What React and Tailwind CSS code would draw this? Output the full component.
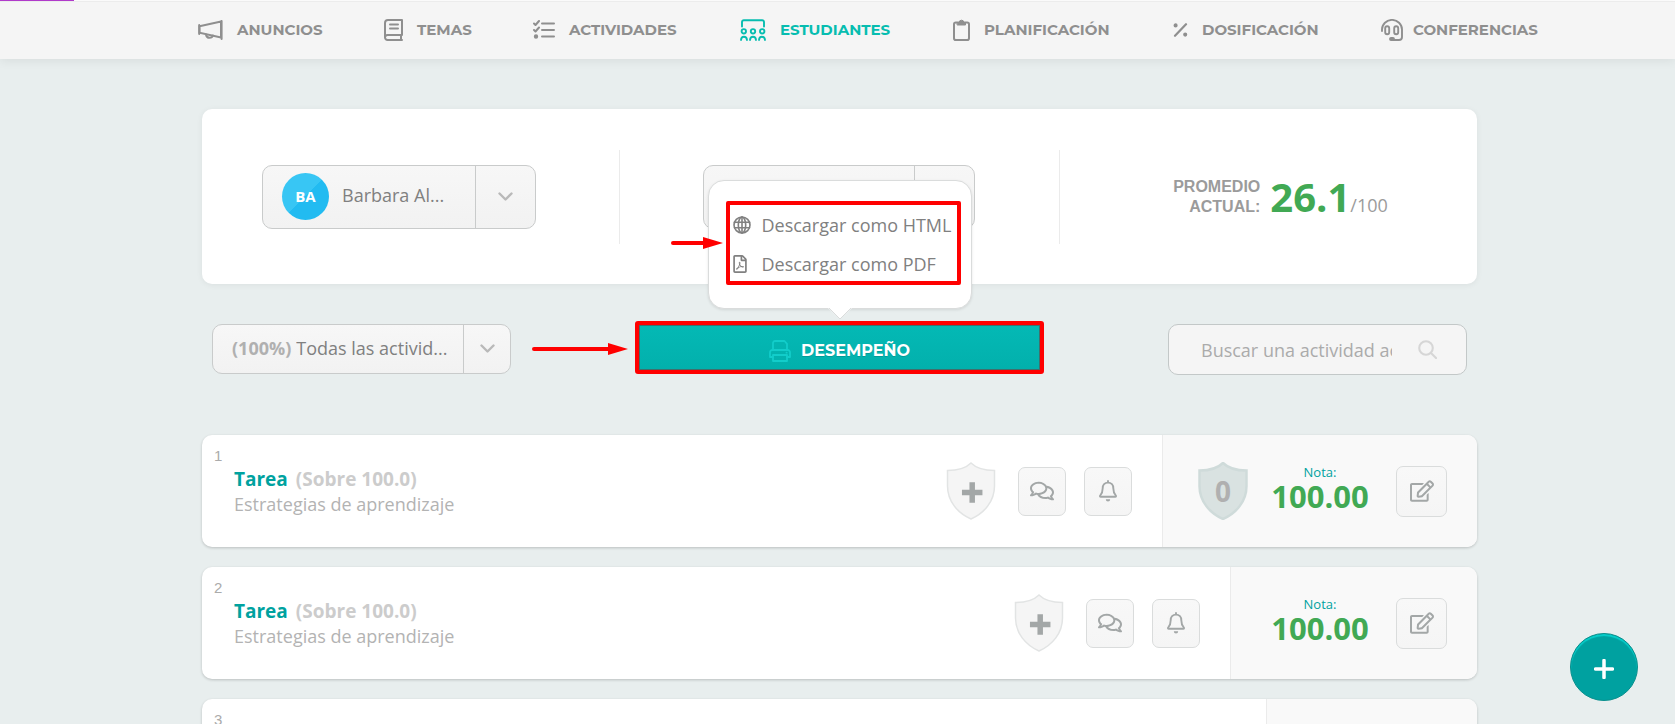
import React from "react";
import { FaRegComments, FaRegEdit, FaRegFilePdf } from "react-icons/fa";

const stroke = {
  fill: "none",
  stroke: "currentColor",
  strokeLinecap: "round",
  strokeLinejoin: "round",
};

const MegaphoneIcon = () => (
  <svg width="25" height="20" viewBox="0 0 25 20" strokeWidth="2" {...stroke}>
    <path d="M1.5 6.2 23 1.5v16L1.5 12.8z" strokeLinejoin="miter" />
    <path d="M1.2 5v9M23.6 1v18" />
    <path d="M8 14.5c.3 2.2 1.800 3.300 3.600 3.300 1.700 0 2.900-.9 3.300-2.300" />
  </svg>
);

const BookIcon = () => (
  <svg width="19" height="22" viewBox="0 0 19 22" strokeWidth="2" {...stroke}>
    <path d="M18 1H4a3 3 0 0 0-3 3v14.500A2.500 2.500 0 0 0 3.500 21H18M18 1v15H3.500A2.500 2.500 0 0 0 1 18.500M17 16v5" />
    <path d="M6 5.500h8M6 9.500h8" />
  </svg>
);

const TasksIcon = () => (
  <svg width="22" height="20" viewBox="0 0 22 20" strokeWidth="2" {...stroke}>
    <path d="M9 3.500h12M9 10h12M9 16.500h12" />
    <path d="m1 3.500 1.500 1.500L6 1M1 10l1.500 1.500L6 7.500" />
    <circle cx="3" cy="16.500" r="1.200" fill="currentColor" />
  </svg>
);

const ClassIcon = () => (
  <svg width="26" height="22" viewBox="0 0 26 22" strokeWidth="1.900" {...stroke}>
    <path d="M2 7.500V3a1.800 1.800 0 0 1 1.800-1.800h18.400A1.800 1.800 0 0 1 24 3v4.500" />
    <circle cx="3.800" cy="12.300" r="2.200" />
    <circle cx="13" cy="12.300" r="2.200" />
    <circle cx="22.200" cy="12.300" r="2.200" />
    <path d="M1 21c.2-2 1.300-3.200 2.900-3.200S6.800 19 7 21M10 21c.2-2 1.400-3.200 3-3.200s2.800 1.200 3 3.200M19 21c.2-2 1.300-3.200 2.900-3.200S24.800 19 25 21" />
  </svg>
);

const ClipboardIcon = () => (
  <svg width="17" height="22" viewBox="0 0 17 22" strokeWidth="2" {...stroke}>
    <rect x="1" y="3.500" width="15" height="17.500" rx="1.800" />
    <path
      d="M4.500 3.500h1.700a2.300 2.300 0 0 1 4.600 0h1.700V6h-8z"
      fill="currentColor"
      strokeWidth="1"
    />
  </svg>
);

const PercentIcon = () => (
  <svg width="15" height="14" viewBox="0 0 15 14" strokeWidth="2.200" {...stroke}>
    <path d="M2 12.800 13 1.200" />
    <circle cx="2.600" cy="2.400" r="1.300" fill="currentColor" strokeWidth="1.500" />
    <circle cx="12.200" cy="11.600" r="1.300" fill="currentColor" strokeWidth="1.500" />
  </svg>
);

const HeadsetIcon = () => (
  <svg width="22" height="22" viewBox="0 0 22 22" strokeWidth="1.900" {...stroke}>
    <path d="M1 12v-1.500a9.900 9.500 0 0 1 20 0V18a3 3 0 0 1-3 3h-6" />
    <rect x="4.200" y="7.300" width="4" height="8" rx="2" />
    <rect x="13.200" y="7.300" width="4" height="8" rx="2" />
    <rect x="9" y="19" width="4" height="2" rx="1" fill="currentColor" />
  </svg>
);

const ChevronIcon = () => (
  <svg width="15" height="10" viewBox="0 0 15 10" {...stroke} strokeWidth="2.400" className="pointer-events-none text-[#b9b9b9]">
    <path d="m1.500 1.500 6 6 6-6" />
  </svg>
);

const GlobeIcon = () => (
  <svg width="18" height="18" viewBox="0 0 18 18" strokeWidth="1.600" {...stroke}>
    <circle cx="9" cy="9" r="8" />
    <ellipse cx="9" cy="9" rx="3.700" ry="8" />
    <path d="M1.500 6.200h15M1.500 11.800h15M9 1v16" />
  </svg>
);

const PrinterIcon = () => (
  <svg width="22" height="22" viewBox="0 0 22 22" strokeWidth="1.800" {...stroke}>
    <path d="M4 10V3a2 2 0 0 1 2-2h9.500L18 3.800V10" />
    <path d="M4 17H1v-4.500A2.500 2.500 0 0 1 3.500 10h15a2.500 2.500 0 0 1 2.500 2.500V17h-3" />
    <path d="M4 15h14v6H4z" />
    <path d="M17.500 12.700h.2" />
  </svg>
);

const SearchIcon = () => (
  <svg width="19" height="19" viewBox="0 0 19 19" strokeWidth="2.100" {...stroke} className="shrink-0 text-[#d6d6d6]">
    <circle cx="8" cy="8" r="6.800" />
    <path d="m13 13 5 5" />
  </svg>
);

const BellIcon = () => (
  <svg width="18" height="22" viewBox="0 0 18 22" strokeWidth="1.900" {...stroke}>
    <path d="M9 1v1.500M9 2.600c-3.300 0-5.300 2.400-5.300 5.600 0 4.300-1.200 5.800-2.500 7.300-.4.500-.2 1.300.5 1.300h14.600c.7 0 .9-.8.500-1.300-1.300-1.500-2.500-3-2.500-7.300 0-3.200-2-5.600-5.300-5.600z" />
    <path d="M6.800 19.300h4.400a2.200 2.200 0 0 1-4.400 0z" fill="currentColor" stroke="none" />
  </svg>
);

const SHIELD =
  "M25 1C20 6 12 8.500 1.500 8.500V24c0 15 10 27 23.500 33 13.500-6 23.500-18 23.500-33V8.500C38 8.500 30 6 25 1z";

const PlusShield = () => (
  <button type="button" aria-label="Agregar insignia">
    <svg width="50" height="58" viewBox="0 0 50 58">
      <path d={SHIELD} fill="#f5f5f5" stroke="#e2e4e4" strokeWidth="1.500" />
      <path d="M26.200 23v15M18.700 30.500h15" stroke="#a3a7a7" strokeWidth="5.500" strokeLinecap="square" />
    </svg>
  </button>
);

const ScoreShield = ({ value }) => (
  <div className="grid h-[58px] w-[50px] shrink-0 place-items-center">
    <svg width="50" height="58" viewBox="0 0 50 58" className="col-start-1 row-start-1">
      <path d={SHIELD} fill="#d9e2e1" stroke="#cfdbda" strokeWidth="2.500" />
    </svg>
    <span className="col-start-1 row-start-1 text-[28px] leading-8 font-bold text-[#b0b0b0]">{value}</span>
  </div>
);

const NAV = [
  { label: "ANUNCIOS", icon: <MegaphoneIcon /> },
  { label: "TEMAS", icon: <BookIcon /> },
  { label: "ACTIVIDADES", icon: <TasksIcon /> },
  { label: "ESTUDIANTES", icon: <ClassIcon />, active: true },
  { label: "PLANIFICACIÓN", icon: <ClipboardIcon /> },
  { label: "DOSIFICACIÓN", icon: <PercentIcon /> },
  { label: "CONFERENCIAS", icon: <HeadsetIcon />, tight: true },
];

function Nav() {
  return (
    <header>
      <div className="h-px bg-white">
        <div className="h-px w-[74px] bg-[#b43ccf]" />
      </div>
      <nav className="grid h-[58px] grid-cols-[186fr_149fr_207fr_213fr_220fr_208fr_159fr] items-center border-t border-[#ececec] bg-[#f5f5f5] pr-[135px] pb-0.5 pl-[198px] shadow-[0_2px_10px_rgba(0,0,0,0.07)]">
        {NAV.map((item) => (
          <a
            key={item.label}
            href="#"
            className={
              "flex items-center font-['Montserrat','Inter',sans-serif] text-[15px] leading-6 font-bold " +
              (item.tight ? "gap-2.5 " : "gap-3.5 ") +
              (item.active ? "text-[#07bdb0]" : "text-[#8f8f8f]")
            }
          >
            {item.icon}
            {item.label}
          </a>
        ))}
      </nav>
    </header>
  );
}

const boxStyle =
  "flex items-stretch overflow-hidden rounded-[10px] border border-[#c9cbcb] bg-linear-to-b from-[#f7f7f7] to-[#f2f2f2]";

function Summary() {
  return (
    <section className="grid h-[175px] grid-cols-[418fr_440fr_417fr] items-center rounded-[10px] bg-white shadow-[0_1px_6px_rgba(0,0,0,0.06)]">
      <div className="flex h-[94px] items-center justify-center border-r border-[#ebebeb] pr-[23px]">
        <div className={boxStyle + " h-16 w-[274px]"}>
          <div className="flex min-w-0 flex-1 items-center gap-[13px] pl-[19px]">
            <span className="grid size-[47px] shrink-0 place-items-center rounded-full bg-[linear-gradient(135deg,#38c6f4_50%,#22bbf1_50%)] text-[15px] font-bold text-white">
              BA
            </span>
            <select aria-label="Estudiante" className="min-w-0 flex-1 appearance-none bg-transparent pb-1 text-lg text-[#808080] outline-none">
              <option>Barbara Al...</option>
            </select>
          </div>
          <div className="flex w-[60px] items-center justify-center border-l border-[#c9cbcb]">
            <ChevronIcon />
          </div>
        </div>
      </div>
      <div className="flex h-[94px] items-center justify-center border-r border-[#ebebeb] pr-0.5">
        <div className={boxStyle + " h-16 w-[272px]"}>
          <select aria-label="Periodo" className="min-w-0 flex-1 appearance-none bg-transparent outline-none" />
          <div className="w-[60px] border-l border-[#c9cbcb]" />
        </div>
      </div>
      <div className="flex items-center justify-center gap-2.5 pl-6">
        <p className="text-right font-['Liberation_Sans',sans-serif] text-base leading-5 font-bold text-[#9b9b9b]">
          PROMEDIO
          <br />
          ACTUAL:
        </p>
        <p className="flex items-baseline text-[#9b9b9b]">
          <strong className="text-[40px] leading-12 font-bold text-[#41a954]">26.1</strong>
          <span className="text-lg">/100</span>
        </p>
      </div>
    </section>
  );
}

const Arrow = ({ width, className }) => (
  <svg width={width} height="12" viewBox={`0 0 ${width} 12`} className={"absolute " + className} aria-hidden="true">
    <path d={`M2 6H${width - 18}`} stroke="#f00" strokeWidth="4" strokeLinecap="round" />
    <path d={`M${width - 20} 0 ${width} 6 ${width - 20} 12z`} fill="#f00" />
  </svg>
);

const menuItem =
  "flex h-8 w-full items-center gap-[11px] text-lg whitespace-nowrap text-[#808080]";

function DownloadMenu() {
  return (
    <div className="absolute bottom-full left-1/2 mb-3 w-[264px] -translate-x-1/2 rounded-[16px] border border-[#dadcdc] bg-white pt-5 pr-2.5 pb-[23px] pl-[17px] shadow-[0_1px_3px_rgba(0,0,0,0.1)]">
      <Arrow width={52} className="top-14 -left-[38px]" />
      <div className="flex flex-col gap-[7px] rounded-[2px] border-4 border-[#f00] pt-1 pb-px pl-[3px]">
        <button type="button" className={menuItem}>
          <span className="w-[18px]"><GlobeIcon /></span>
          Descargar como HTML
        </button>
        <button type="button" className={menuItem}>
          <span className="w-[18px]"><FaRegFilePdf className="size-[18px] -ml-[2px]" /></span>
          Descargar como PDF
        </button>
      </div>
      <svg width="24" height="12" viewBox="0 0 24 12" className="absolute top-full left-1/2 -translate-x-1/2">
        <path d="M0 0h24L12 11z" fill="#fff" />
        <path d="M1 0 12 11 23 0" fill="none" stroke="#dadcdc" />
      </svg>
    </div>
  );
}

function Toolbar() {
  return (
    <div className="mt-[37px] flex items-start justify-between px-2.5">
      <div className={boxStyle + " mt-[3px] h-[50px] w-[299px]"}>
        <label htmlFor="filtro" className="flex items-center pr-[5px] pb-0.5 pl-[19px] text-lg font-bold text-[#b0b0b0]">
          (100%)
        </label>
        <select id="filtro" className="min-w-0 flex-1 appearance-none bg-transparent pb-0.5 text-lg text-[#808080] outline-none">
          <option>Todas las activid...</option>
        </select>
        <div className="flex w-[47px] items-center justify-center border-l border-[#c9cbcb]">
          <ChevronIcon />
        </div>
      </div>
      <div className="relative w-[409px]">
        <Arrow width={96} className="top-[22px] -left-[103px]" />
        <button
          type="button"
          className="flex h-[53px] w-full items-center justify-center gap-2.5 rounded-[3px] border-4 border-[#f00] bg-linear-to-b from-[#04b9b5] to-[#02b0ac] pt-1.5 font-['Montserrat','Inter',sans-serif] text-base font-bold text-white inset-shadow-[0_0_0_1px_#3f6f6d] text-shadow-2xs"
        >
          <span className="text-[#12cdca]"><PrinterIcon /></span>
          DESEMPEÑO
        </button>
        <DownloadMenu />
      </div>
      <label className="mt-[3px] flex h-[51px] w-[299px] items-center rounded-[10px] border border-[#c3c8c8] bg-[#f5f5f5] pr-[29px] pl-8">
        <input
          type="text"
          aria-label="Buscar una actividad"
          placeholder="Buscar una actividad académica"
          className="mr-[26px] min-w-0 flex-1 bg-transparent text-lg outline-none placeholder:text-[#ababab]"
        />
        <SearchIcon />
      </label>
    </div>
  );
}

const iconButton =
  "grid shrink-0 place-items-center rounded-[7px] border border-[#dadcdc] bg-linear-to-b from-[#f8f8f8] to-[#f5f5f5] text-[#a3a7a7]";

function TaskRow({ number, score, wide }) {
  return (
    <article className="flex h-28 overflow-hidden rounded-[10px] bg-white shadow-[0_1px_3px_rgba(0,0,0,0.2)]">
      <span className="mt-[11px] ml-3 w-5 font-['Liberation_Sans',sans-serif] text-[15px] leading-5 text-[#ababab]">
        {number}
      </span>
      <div className="flex-1 pt-8">
        <h2 className="flex gap-2 text-[19px] leading-6 font-bold text-[#ccc]">
          <a href="#" className="text-[#00a29f]">Tarea</a>
          (Sobre 100.0)
        </h2>
        <p className="text-lg leading-[26px] text-[#b3b3b3]">Estrategias de aprendizaje</p>
      </div>
      <div className="flex items-center pr-[30px]">
        <PlusShield />
        <button type="button" aria-label="Comentarios" className={iconButton + " ml-[22px] h-[49px] w-12"}>
          <FaRegComments className="size-6" />
        </button>
        <button type="button" aria-label="Notificar" className={iconButton + " ml-[18px] h-[49px] w-12"}>
          <BellIcon />
        </button>
      </div>
      <div className={"flex items-center justify-end border-l border-[#ebebeb] bg-[#f9f9f9] pr-[30px] " + wide}>
        {score !== undefined && <ScoreShield value={score} />}
        <p className="ml-6 flex w-24 flex-col items-center pb-1.5 text-[13px] leading-4 text-[#00a29f]">
          Nota:
          <strong className="text-[31px] leading-8 font-bold text-[#41a954]">100.00</strong>
        </p>
        <button type="button" aria-label="Editar nota" className={iconButton + " ml-7 size-[51px]"}>
          <FaRegEdit className="size-6" />
        </button>
      </div>
    </article>
  );
}

export default function App() {
  return (
    <div className="h-screen overflow-hidden bg-[#e8eeee] font-['Open_Sans',sans-serif]">
      <Nav />
      <main className="mx-auto mt-[50px] w-full max-w-[1279px] pl-1">
        <Summary />
        <Toolbar />
        <div className="mt-[60px] flex flex-col gap-5">
          <TaskRow number={1} score={0} wide="w-[315px]" />
          <TaskRow number={2} wide="w-[247px]" />
          <TaskRow number={3} wide="w-[211px]" />
        </div>
      </main>
      <button
        type="button"
        aria-label="Agregar"
        className="fixed right-[37px] bottom-[23px] grid size-[68px] place-items-center rounded-full border border-[#0a8f8d] bg-[#00a1a0] inset-shadow-[0_2px_1px_#06cfcb]"
      >
        <svg width="20" height="20" viewBox="0 0 20 20" className="mt-1">
          <path d="M10 1.500v17M1.500 10h17" stroke="#fff" strokeWidth="3.500" strokeLinecap="round" />
        </svg>
      </button>
    </div>
  );
}
